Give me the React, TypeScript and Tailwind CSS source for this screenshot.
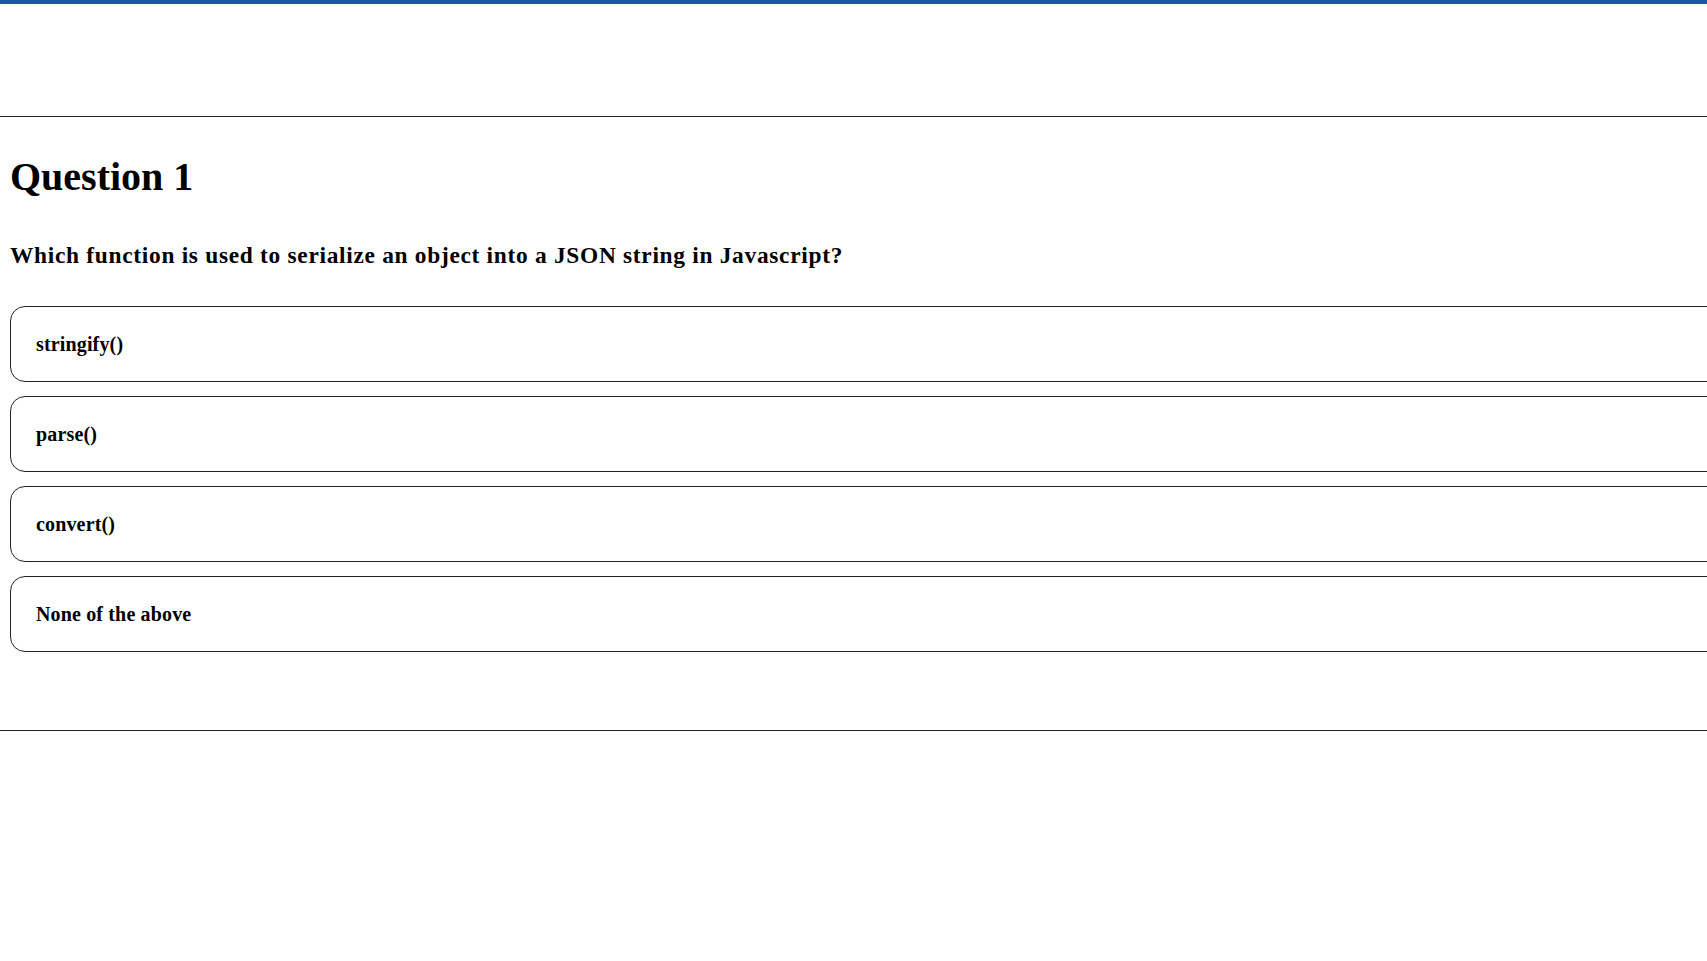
import React from "react";

const options = ["stringify()", "parse()", "convert()", "None of the above"];

export default function App() {
  return (
    <div
      className="w-full min-h-[961px] overflow-hidden bg-white text-black"
      style={{ fontFamily: '"Liberation Serif", "Times New Roman", serif' }}
    >
      <div className="h-[4px] bg-[#1c57a5]" />
      <div className="h-[113px] border-b border-[#222]" />
      <div className="pl-[10px] pt-[37px] pb-[78px]">
        <h1 className="text-[40px] font-bold leading-[46px]">Question 1</h1>
        <h3 className="mt-[42px] text-[23.4px] font-bold leading-[27px] tracking-[0.7px]">
          Which function is used to serialize an object into a JSON string in Javascript?
        </h3>
        <div className="mt-[37px] flex flex-col gap-[14px]">
          {options.map((o) => (
            <div
              key={o}
              className="w-[calc(100%+40px)] h-[76px] flex items-center rounded-[15px] border border-[#222] pl-[25px]"
            >
              <span className="text-[20px] font-bold leading-[23px] tracking-[0.15px]">{o}</span>
            </div>
          ))}
        </div>
      </div>
      <div className="border-t border-[#222]" />
    </div>
  );
}
